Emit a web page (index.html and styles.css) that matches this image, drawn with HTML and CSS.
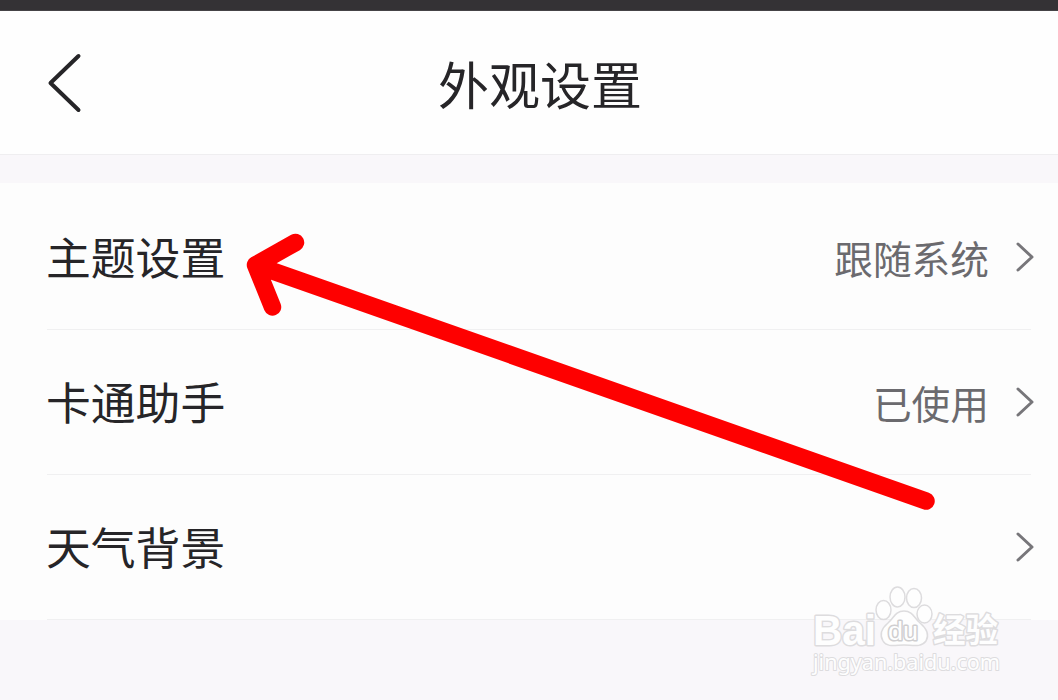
FILE: index.html
```html
<!DOCTYPE html>
<html lang="zh-CN">
<head>
<meta charset="utf-8">
<title>外观设置</title>
<link rel="stylesheet" href="styles.css">
</head>
<body>
<div class="status-bar"></div>
<header class="header">
  <svg class="back" viewBox="0 0 36 62"><path d="M31.500 4 3.500 31 31.500 58"/></svg>
  <h1 class="title">外观设置</h1>
</header>
<main class="list">
  <div class="row">
    <span class="label">主题设置</span>
    <span class="value">跟随系统</span>
    <svg class="chevron" viewBox="0 0 20 32"><path d="M3 3 17 16 3 29"/></svg>
  </div>
  <div class="row">
    <span class="label">卡通助手</span>
    <span class="value">已使用</span>
    <svg class="chevron" viewBox="0 0 20 32"><path d="M3 3 17 16 3 29"/></svg>
  </div>
  <div class="row">
    <span class="label">天气背景</span>
    <span class="value"></span>
    <svg class="chevron" viewBox="0 0 20 32"><path d="M3 3 17 16 3 29"/></svg>
  </div>
</main>
<svg class="arrow" viewBox="0 0 1058 700"><path d="M926 501 255.500 265M295.500 242.500 255.500 265 272.500 307"/></svg>
<svg class="watermark" viewBox="0 0 220 110">
  <g class="outline">
    <text class="brand" x="13" y="64.500" textLength="63" lengthAdjust="spacingAndGlyphs">Bai</text>
    <ellipse cx="83.500" cy="30" rx="7.500" ry="9.500"/>
    <ellipse cx="97.500" cy="17" rx="7.500" ry="10"/>
    <ellipse cx="114" cy="18" rx="7.500" ry="9.500"/>
    <ellipse cx="124.500" cy="34" rx="7.500" ry="9"/>
    <path d="M104 31C95 31 94 38 88 43C82 48 79 54 83 61C87 68 96 65 104 65C112 65 121 68 126 61C130 54 126 48 120 43C114 38 113 31 104 31Z"/>
    <text class="du" x="88" y="60" textLength="30" lengthAdjust="spacingAndGlyphs">du</text>
    <text class="cn" x="133" y="62" textLength="65" lengthAdjust="spacingAndGlyphs">经验</text>
    <text class="site" x="13" y="90" textLength="187" lengthAdjust="spacingAndGlyphs">jingyan.baidu.com</text>
  </g>
</svg>
</body>
</html>
```
FILE: styles.css
```css
* {
  box-sizing: border-box;
}

body {
  margin: 0;
  height: 700px;
  position: relative;
  overflow: hidden;
  background: #f9f7fa;
  color: #262528;
  font-family: "Noto Sans CJK SC", sans-serif;
}

svg {
  fill: none;
  stroke-linecap: round;
  stroke-linejoin: round;
}

.status-bar {
  height: 11px;
  background: #343235;
  border-bottom: 1px solid #454346;
}

.header {
  display: grid;
  grid-template-columns: 90px 1fr 68px;
  align-items: center;
  height: 144px;
  background: #fefefe;
  border-bottom: 1px solid #efeef0;
}

.back {
  width: 36px;
  height: 62px;
  margin-left: 47px;
  stroke: #262528;
  stroke-width: 4;
}

.title {
  margin: 1px 0 0;
  font-size: 51px;
  font-weight: 400;
  line-height: 72px;
  text-align: center;
}

.list {
  margin-top: 28px;
  padding: 2px 27px 0 47px;
  background: #fdfdfd;
}

.row {
  display: flex;
  align-items: center;
  height: 145px;
  border-bottom: 1px solid #f0f0f1;
}

.label {
  flex: 1;
  margin: -2px 0 0 -1px;
  font-size: 44.8px;
  line-height: 66px;
}

.value {
  margin: -1px 26px 0 0;
  font-size: 38.7px;
  line-height: 58px;
  color: #6b6a6e;
}

.chevron {
  width: 20px;
  height: 32px;
  margin-right: -4px;
  stroke: #77767a;
  stroke-width: 3;
}

.arrow {
  position: absolute;
  inset: 0;
  width: 1058px;
  height: 700px;
  stroke: #fe0000;
  stroke-width: 17.5;
}

.watermark {
  position: absolute;
  left: 800px;
  top: 580px;
  width: 220px;
  height: 110px;
}

.outline {
  fill: #fefefe;
  stroke: #dddcde;
  stroke-width: 1.5;
}

.outline text {
  paint-order: stroke;
  stroke-width: 3;
  font-family: "Liberation Sans", sans-serif;
}

.outline .brand {
  font-size: 42px;
  font-weight: 700;
}

.outline .du {
  font-size: 26px;
  font-weight: 400;
  stroke: #cfced0;
}

.outline .cn {
  font-family: "Noto Sans CJK SC", sans-serif;
  font-size: 33px;
  font-weight: 700;
}

.outline .site {
  font-family: "Noto Sans", sans-serif;
  font-size: 22px;
  stroke-width: 2;
}
```
